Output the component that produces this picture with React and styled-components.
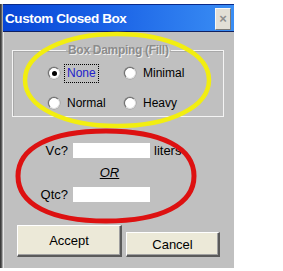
import React from "react";
import styled, { createGlobalStyle, css } from "styled-components";

const Global = createGlobalStyle`
  html, body {
    margin: 0;
    padding: 0;
    background: #ffffff;
  }
  body {
    font-family: "Liberation Sans", Arial, sans-serif;
  }
`;

const Page = styled.div`
  position: relative;
  width: 283px;
  height: 271px;
  overflow: hidden;
  display: flex;
  padding-top: 4px;
  box-sizing: border-box;
`;

const BackStrip = styled.div`
  width: 3px;
  height: 264px;
  background: linear-gradient(90deg, #2a2a2a, #6a6a6a 60%, #d0d0d0);
`;

const Dialog = styled.div`
  width: 231px;
  height: 264px;
  display: flex;
  flex-direction: column;
  background: #c0c0c0;
`;

const TitleBar = styled.div`
  height: 26px;
  display: flex;
  align-items: center;
  justify-content: space-between;
  padding: 0 2px 0 2px;
  border-top: 1px solid #0a2a8a;
  border-bottom: 1px solid #102060;
  background: linear-gradient(90deg, #0846d6 0%, #1a62e6 45%, #3a8ef4 100%);
`;

const Title = styled.div`
  color: #ffffff;
  font-weight: bold;
  font-size: 13.5px;
  letter-spacing: -0.4px;
`;

const CloseButton = styled.div`
  width: 14px;
  height: 20px;
  margin-top: 1px;
  margin-right: 1px;
  background: #e2dfd6;
  border: 1px solid #f8f8f4;
  border-right-color: #7a7a78;
  border-bottom-color: #7a7a78;
  display: flex;
  align-items: center;
  justify-content: center;
  color: #8e8e8e;
  font-size: 13px;
  font-weight: bold;
`;

const Body = styled.div`
  flex: 1;
  display: flex;
  flex-direction: column;
  border-left: 1px solid #e8e8e8;
  font-size: 12px;
  color: #000;
`;

const Group = styled.fieldset`
  margin: 11px 0 0 8px;
  width: 212px;
  height: 74px;
  box-sizing: border-box;
  padding: 8px 0 0 35px;
  border: 1px solid #f4f4f4;
  box-shadow: inset 1px 1px 0 #a8a8a8;
`;

const Legend = styled.legend`
  margin-left: 18px;
  padding: 0 2px;
  font-size: 12px;
  font-weight: bold;
  color: #8c8c8c;
  letter-spacing: -0.3px;
  text-shadow: 1px 1px 0 #f0f0f0;
`;

const RadioGrid = styled.div`
  display: grid;
  grid-template-columns: 76px 76px;
  row-gap: 14px;
`;

const Option = styled.label`
  display: flex;
  align-items: center;
  height: 16px;
  gap: 5px;
`;

const RadioDot = styled.span`
  width: 10px;
  height: 10px;
  border-radius: 50%;
  background: #ffffff;
  border: 1px solid #6a6a6a;
  border-right-color: #e0e0e0;
  border-bottom-color: #e0e0e0;
  box-shadow: 0 0 0 0.5px #9a9a9a;
  display: flex;
  align-items: center;
  justify-content: center;
  ${(p) =>
    p.checked &&
    css`
      &::after {
        content: "";
        width: 5px;
        height: 5px;
        border-radius: 50%;
        background: #000;
      }
    `}
`;

const OptionText = styled.span`
  padding: 1px 2px;
  ${(p) =>
    p.focused &&
    css`
      color: #2222cc;
      outline: 1px dotted #000;
      outline-offset: 0;
      padding: 1px 2px 2px;
    `}
`;

const Form = styled.div`
  margin-top: 26px;
  display: grid;
  grid-template-columns: 65px 77px auto;
  column-gap: 4px;
  align-items: center;
  row-gap: 7px;
`;

const Label = styled.span`
  grid-column: 1;
  text-align: right;
  font-size: 13px;
  padding-right: 1px;
`;

const Field = styled.div`
  grid-column: 2;
  height: 15px;
  background: #ffffff;
`;

const Unit = styled.span`
  grid-column: 3;
  font-size: 13px;
`;

const Or = styled.span`
  grid-column: 2;
  justify-self: center;
  margin-right: 4px;
  font-style: italic;
  text-decoration: underline;
  font-size: 13px;
`;

const Buttons = styled.div`
  margin: 23px 0 0 13px;
  display: flex;
  align-items: flex-end;
  gap: 4px;
`;

const Button = styled.div`
  width: ${(p) => p.w}px;
  height: ${(p) => p.h}px;
  box-sizing: border-box;
  background: #ece9d8;
  border: 1px solid #ffffff;
  border-right: 2px solid #5a5a5a;
  border-bottom: 2px solid #5a5a5a;
  box-shadow: inset -1px -1px 0 #a0a0a0;
  display: flex;
  align-items: center;
  justify-content: center;
  font-size: 13px;
  color: #000;
`;

const Marks = styled.svg`
  position: absolute;
  left: 0;
  top: 0;
  pointer-events: none;
`;

// rounder-than-ellipse loop, like a hand-drawn marker circle
const loop = (cx, cy, rx, ry, k) => {
  const kx = rx * k;
  const ky = ry * k;
  return [
    `M ${cx - rx} ${cy}`,
    `C ${cx - rx} ${cy - ky} ${cx - kx} ${cy - ry} ${cx} ${cy - ry}`,
    `C ${cx + kx} ${cy - ry} ${cx + rx} ${cy - ky} ${cx + rx} ${cy}`,
    `C ${cx + rx} ${cy + ky} ${cx + kx} ${cy + ry} ${cx} ${cy + ry}`,
    `C ${cx - kx} ${cy + ry} ${cx - rx} ${cy + ky} ${cx - rx} ${cy}`,
    "Z",
  ].join(" ");
};

export default function App() {
  return (
    <>
      <Global />
      <Page>
        <BackStrip />
        <Dialog>
          <TitleBar>
            <Title>Custom Closed Box</Title>
            <CloseButton>×</CloseButton>
          </TitleBar>
          <Body>
            <Group>
              <Legend>Box Damping (Fill)</Legend>
              <RadioGrid>
                <Option>
                  <RadioDot checked />
                  <OptionText focused>None</OptionText>
                </Option>
                <Option>
                  <RadioDot />
                  <OptionText>Minimal</OptionText>
                </Option>
                <Option>
                  <RadioDot />
                  <OptionText>Normal</OptionText>
                </Option>
                <Option>
                  <RadioDot />
                  <OptionText>Heavy</OptionText>
                </Option>
              </RadioGrid>
            </Group>
            <Form>
              <Label>Vc?</Label>
              <Field />
              <Unit>liters</Unit>
              <Or>OR</Or>
              <Label>Qtc?</Label>
              <Field />
            </Form>
            <Buttons>
              <Button w={105} h={32}>Accept</Button>
              <Button w={94} h={25}>Cancel</Button>
            </Buttons>
          </Body>
        </Dialog>
        <Marks width="283" height="271">
          <path d={loop(117, 80, 92, 46, 0.58)} fill="none" stroke="#f2ee10" strokeWidth="4.5" />
          <path d={loop(106, 176, 88, 45, 0.63)} fill="none" stroke="#dd1111" strokeWidth="5" />
        </Marks>
      </Page>
    </>
  );
}
